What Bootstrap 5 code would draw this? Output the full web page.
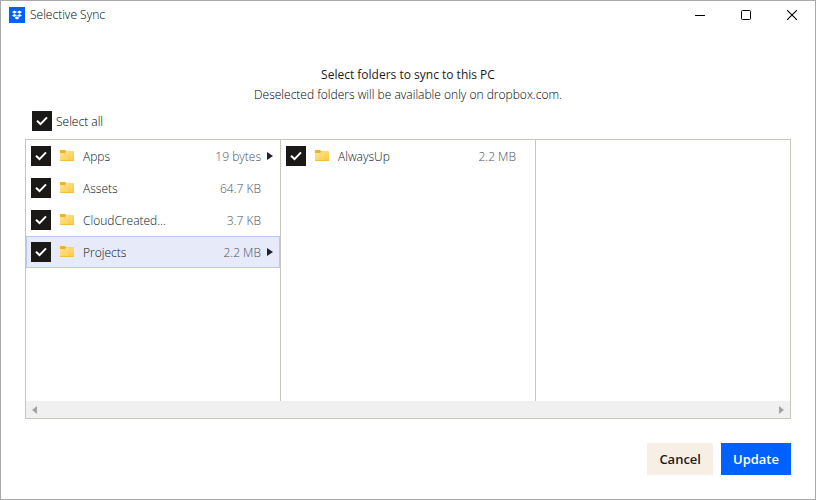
<!DOCTYPE html>
<html lang="en">
<head>
<meta charset="utf-8">
<meta name="viewport" content="width=device-width, initial-scale=1">
<title>Selective Sync</title>
<link href="https://cdn.jsdelivr.net/npm/bootstrap@5.3.0/dist/css/bootstrap.min.css" rel="stylesheet">
<style>
  body { font: 300 12px/20px "Open Sans", "Noto Sans", sans-serif; color: #000; background: #fff; }
  .window { border: 1px solid #a9a9a9; }
  .titlebar { height: 28px; padding-left: 8px; color: #000; }
  .titlebar h1 { font-size: 12px; line-height: 16px; font-weight: 300; margin-left: 5px; }
  .caption-btn { width: 46px; height: 28px; border: 0; border-radius: 0; padding: 0; }
  .window-body { padding: 36px 24px 24px; }
  .intro h2 { font-size: 12px; line-height: 20px; font-weight: 500; color: #1e1919; }
  .intro p { font-size: 12px; line-height: 20px; }
  .sync-check.form-check-input {
    width: 20px; height: 20px; margin: 0; border: 0; border-radius: 0; flex: none;
  }
  .sync-check.form-check-input:not(:checked) { box-shadow: inset 0 0 0 1px #1a1918; }
  .sync-check.form-check-input:checked {
    background: #1a1918 url("data:image/svg+xml,%3Csvg xmlns='http://www.w3.org/2000/svg' viewBox='0 0 20 20'%3E%3Cpath d='M5 9.8l3.500 3.300 6.500-6.700' fill='none' stroke='%23fff' stroke-width='2'/%3E%3C/svg%3E") center/20px no-repeat;
  }
  .select-all { padding: 6px 0 8px 7px; gap: 4px; }
  .select-all label, .entry label, .entry-size { padding-top: 2px; }
  .select-all label { line-height: 18px; }
  .browser { border: 1px solid #c8c5bc; }
  .pane { flex: 1 1 0; min-width: 0; }
  .pane + .pane { border-left: 1px solid #c8c5bc; }
  .entry { height: 32px; padding: 0 6px 0 5px; color: #0c1526; }
  .entry.selected { background: #e7eaf9; box-shadow: inset 0 0 0 1px #b9c8ee; }
  .folder { width: 16px; height: 14px; margin: 0 8px; }
  .entry-size { color: #4c525e; margin-right: 5px; }
  .expander { width: 8px; height: 10px; border: 0; background: none; padding: 0; display: flex; flex: none; }
  .scroll-track { height: 17px; padding: 0 4px; background: #f0f0f0; }
  .scroll-track button { width: 9px; height: 17px; border: 0; background: none; padding: 0; display: flex; align-items: center; justify-content: center; }
  .actions { padding-top: 24px; gap: 8px; }
  .action { height: 32px; padding: 0 12px; border: 0; border-radius: 0; font-size: 13px; line-height: 32px; font-weight: 600; }
  .action-cancel, .action-cancel:hover { background: #f7efe6; color: #1e1919; }
  .action-update, .action-update:hover { background: #0061fe; color: #fff; }
</style>
<script src="https://cdn.jsdelivr.net/npm/bootstrap@5.3.0/dist/js/bootstrap.bundle.min.js"></script>
</head>
<body>
<svg class="position-absolute" width="0" height="0" aria-hidden="true">
  <defs>
    <linearGradient id="folder-fill" x1="0" y1="0" x2="1" y2="1"><stop offset="0" stop-color="#ffe597"/><stop offset="1" stop-color="#ffc83c"/></linearGradient>
  </defs>
  <symbol id="folder" viewBox="0 0 16 14">
    <path d="M1 1.500Q1 1 1.500 1H6L7.500 2.500H14.500Q15 2.500 15 3V6H1z" fill="#f5b21d"/>
    <path d="M1 4H6L7.500 2.500H14.500Q15 2.500 15 3V11.500Q15 12 14.500 12H1.500Q1 12 1 11.500z" fill="url(#folder-fill)"/>
    <path d="M1 11.300H15Q15 12 14.500 12H1.500Q1 12 1 11.300z" fill="#eeb73d"/>
  </symbol>
  <symbol id="arrow" viewBox="0 0 8 10"><path d="M1 1L7 5L1 9z" fill="#1c2333"/></symbol>
</svg>

<div class="window d-flex flex-column min-vh-100">
  <header class="titlebar d-flex align-items-center">
    <svg width="16" height="16" viewBox="0 0 16 16" aria-hidden="true">
      <rect width="16" height="16" fill="#0061fe"/>
      <path d="M5.500 3.500L8 5.100 5.500 6.700 3 5.100zM10.500 3.500L13 5.100 10.500 6.700 8 5.100zM5.500 6.900L8 8.500 5.500 10.100 3 8.500zM10.500 6.900L13 8.500 10.500 10.100 8 8.500zM8 9.300L10.500 10.900 8 12.500 5.500 10.900z" fill="#fff"/>
    </svg>
    <h1 class="mb-0 me-auto">Selective Sync</h1>
    <button class="btn caption-btn d-flex align-items-center justify-content-center" type="button" aria-label="Minimize">
      <svg width="10" height="10" viewBox="0 0 10 10"><path d="M0 5.500H10" stroke="#000"/></svg>
    </button>
    <button class="btn caption-btn d-flex align-items-center justify-content-center" type="button" aria-label="Maximize">
      <svg width="10" height="10" viewBox="0 0 10 10"><rect x=".5" y=".5" width="9" height="9" rx="1" fill="none" stroke="#000"/></svg>
    </button>
    <button class="btn caption-btn d-flex align-items-center justify-content-center" type="button" aria-label="Close">
      <svg width="10" height="10" viewBox="0 0 10 10"><path d="M0 0L10 10M10 0L0 10" stroke="#000" stroke-width="1.100"/></svg>
    </button>
  </header>

  <main class="window-body d-flex flex-column flex-grow-1">
    <div class="intro text-center">
      <h2 class="mb-0">Select folders to sync to this PC</h2>
      <p class="mb-0">Deselected folders will be available only on dropbox.com.</p>
    </div>

    <div class="select-all d-flex align-items-center">
      <input class="form-check-input sync-check" type="checkbox" id="all" checked>
      <label for="all">Select all</label>
    </div>

    <section class="browser d-flex flex-column flex-grow-1" aria-label="Folders">
      <div class="d-flex flex-grow-1">
        <ul class="pane list-unstyled mb-0">
          <li class="entry d-flex align-items-center">
            <input class="form-check-input sync-check" type="checkbox" id="apps" checked>
            <svg class="folder flex-shrink-0" aria-hidden="true"><use href="#folder"/></svg>
            <label class="me-auto text-truncate" for="apps">Apps</label>
            <span class="entry-size text-nowrap">19 bytes</span>
            <button class="expander" type="button" aria-label="Open Apps"><svg width="8" height="10"><use href="#arrow"/></svg></button>
          </li>
          <li class="entry d-flex align-items-center">
            <input class="form-check-input sync-check" type="checkbox" id="assets" checked>
            <svg class="folder flex-shrink-0" aria-hidden="true"><use href="#folder"/></svg>
            <label class="me-auto text-truncate" for="assets">Assets</label>
            <span class="entry-size text-nowrap">64.7 KB</span>
            <span class="expander"></span>
          </li>
          <li class="entry d-flex align-items-center">
            <input class="form-check-input sync-check" type="checkbox" id="cloud" checked>
            <svg class="folder flex-shrink-0" aria-hidden="true"><use href="#folder"/></svg>
            <label class="me-auto text-truncate" for="cloud">CloudCreated...</label>
            <span class="entry-size text-nowrap">3.7 KB</span>
            <span class="expander"></span>
          </li>
          <li class="entry selected d-flex align-items-center">
            <input class="form-check-input sync-check" type="checkbox" id="projects" checked>
            <svg class="folder flex-shrink-0" aria-hidden="true"><use href="#folder"/></svg>
            <label class="me-auto text-truncate" for="projects">Projects</label>
            <span class="entry-size text-nowrap">2.2 MB</span>
            <button class="expander" type="button" aria-label="Open Projects"><svg width="8" height="10"><use href="#arrow"/></svg></button>
          </li>
        </ul>
        <ul class="pane list-unstyled mb-0">
          <li class="entry d-flex align-items-center">
            <input class="form-check-input sync-check" type="checkbox" id="alwaysup" checked>
            <svg class="folder flex-shrink-0" aria-hidden="true"><use href="#folder"/></svg>
            <label class="me-auto text-truncate" for="alwaysup">AlwaysUp</label>
            <span class="entry-size text-nowrap">2.2 MB</span>
            <span class="expander"></span>
          </li>
        </ul>
        <div class="pane"></div>
      </div>
      <div class="scroll-track d-flex justify-content-between">
        <button type="button" aria-label="Scroll left"><svg width="5" height="8" viewBox="0 0 5 8"><path d="M5 0V8L0 4z" fill="#a3a3a3"/></svg></button>
        <button type="button" aria-label="Scroll right"><svg width="5" height="8" viewBox="0 0 5 8"><path d="M0 0V8L5 4z" fill="#a3a3a3"/></svg></button>
      </div>
    </section>

    <footer class="actions d-flex justify-content-end">
      <button class="btn action action-cancel" type="button">Cancel</button>
      <button class="btn action action-update" type="button">Update</button>
    </footer>
  </main>
</div>
</body>
</html>
